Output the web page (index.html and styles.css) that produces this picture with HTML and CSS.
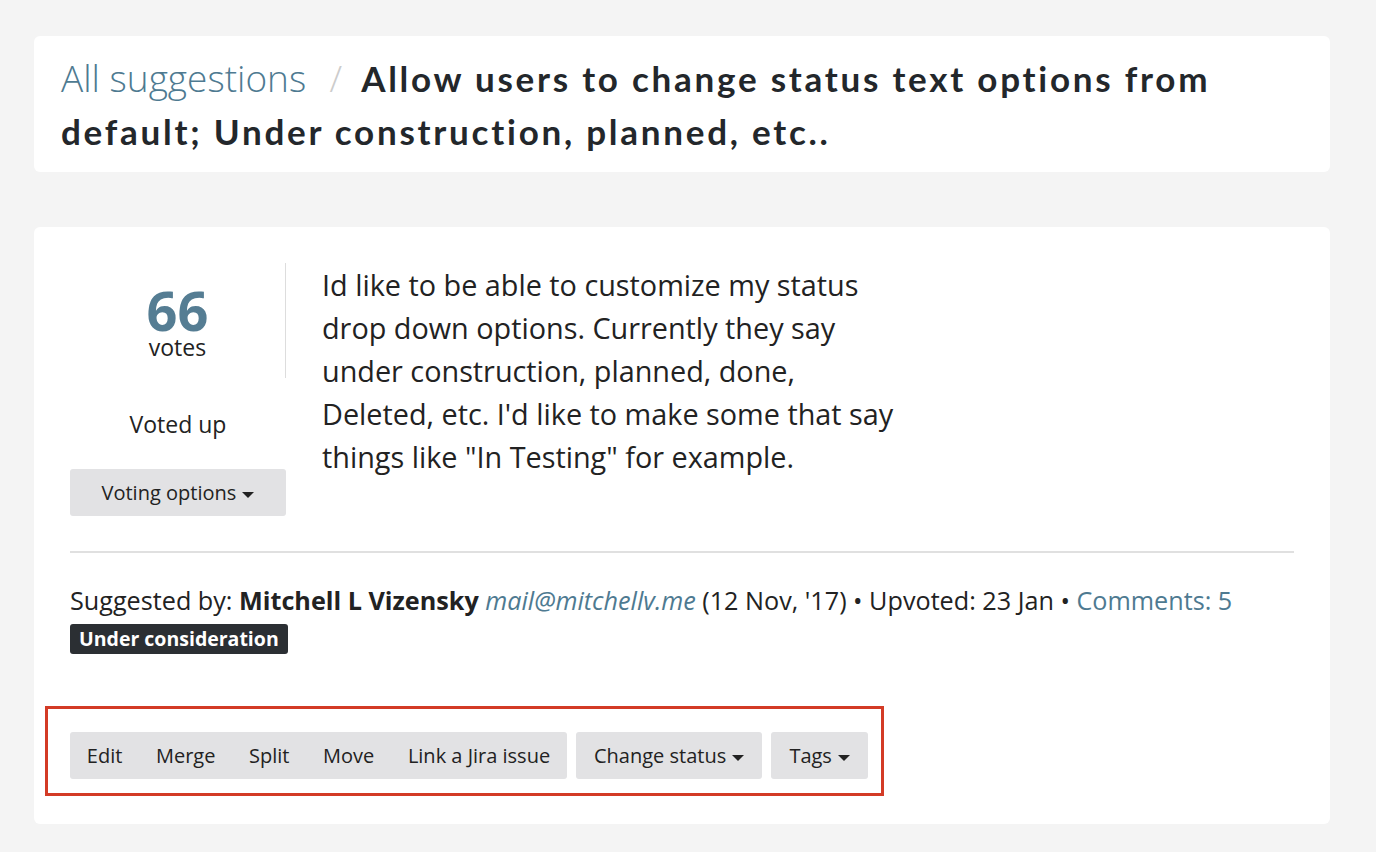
FILE: index.html
```html
<!DOCTYPE html>
<html>
<head>
    <title>Suggestion</title>
    <link rel="stylesheet" href="styles.css">
</head>
<body>
    <div class="page">
        <div class="card title-card">
            <h1 class="title">
                <a class="crumb" href="#">All suggestions</a>
                <span class="crumb-sep">/</span>
                Allow users to change status text options from default; Under construction, planned, etc..
            </h1>
        </div>

        <div class="card suggestion-card">
            <div class="suggestion-top">
                <div class="vote-col">
                    <div class="vote-count">
                        <div class="vote-number">66</div>
                        <div class="vote-label">votes</div>
                    </div>
                    <div class="voted-state">Voted up</div>
                    <button class="btn btn-wide">Voting options <span class="caret"></span></button>
                </div>
                <div class="description">
                    Id like to be able to customize my status drop down options. Currently they say under construction, planned, done, Deleted, etc. I'd like to make some that say things like "In Testing" for example.
                </div>
            </div>

            <hr class="divider">

            <div class="meta">
                Suggested by: <strong>Mitchell L Vizensky</strong> <a class="email" href="#">mail@mitchellv.me</a> (12 Nov, '17) &bull; Upvoted: 23 Jan &bull; <a href="#">Comments: 5</a>
            </div>
            <span class="status-badge">Under consideration</span>

            <div class="actions-box">
                <div class="btn-group">
                    <button class="btn">Edit</button>
                    <button class="btn">Merge</button>
                    <button class="btn">Split</button>
                    <button class="btn">Move</button>
                    <button class="btn">Link a Jira issue</button>
                </div>
                <button class="btn btn-solo">Change status <span class="caret"></span></button>
                <button class="btn btn-solo">Tags <span class="caret"></span></button>
            </div>
        </div>
    </div>
</body>
</html>
```

FILE: styles.css
```css
body {
    margin: 0;
    padding: 0;
    font-family: "Open Sans", Arial, sans-serif;
    background: #f4f4f4;
    color: #222;
}
a {
    color: #4e7a91;
    text-decoration: none;
}
.page {
    margin: 36px 46px 0 34px;
}
.card {
    background: #fff;
    border-radius: 6px;
}
.title-card {
    padding: 15px 27px 14px;
}
.title {
    margin: 0;
    font-family: "Lato", "Open Sans", sans-serif;
    font-weight: 700;
    font-size: 35px;
    line-height: 53px;
    color: #23272b;
    letter-spacing: 2.75px;
}
.crumb {
    font-family: "Open Sans", sans-serif;
    font-weight: 300;
    font-size: 37px;
    letter-spacing: 0;
}
.crumb-sep {
    font-family: "Open Sans", sans-serif;
    font-weight: 300;
    font-size: 37px;
    color: #ccc;
    letter-spacing: 0;
    margin: 0 9px 0 12px;
}
.suggestion-card {
    margin-top: 55px;
    padding: 36px 36px 28px;
}
.suggestion-top {
    display: flex;
}
.vote-col {
    width: 216px;
    flex-shrink: 0;
    text-align: center;
}
.vote-count {
    border-right: 1px solid #ddd;
    height: 115px;
    box-sizing: border-box;
    padding-top: 22px;
}
.vote-number {
    font-size: 54px;
    font-weight: 700;
    line-height: 50px;
    color: #557d93;
}
.vote-label {
    font-size: 23px;
    line-height: 24px;
    color: #222;
}
.voted-state {
    font-size: 23px;
    margin-top: 28px;
    line-height: 36px;
}
.description {
    padding-left: 36px;
    max-width: 585px;
    font-size: 28.8px;
    line-height: 43px;
}
.btn {
    font-family: "Open Sans", sans-serif;
    font-size: 20px;
    color: #222;
    background: #e2e2e4;
    border: none;
    border-radius: 3px;
    height: 47px;
    padding: 0 18px;
    cursor: pointer;
}
.btn-wide {
    width: 216px;
    margin-top: 27px;
}
.caret {
    display: inline-block;
    width: 0;
    height: 0;
    border-left: 6px solid transparent;
    border-right: 6px solid transparent;
    border-top: 6px solid #222;
    vertical-align: middle;
    margin-left: 1px;
}
.divider {
    border: none;
    border-top: 2px solid #e0e0e0;
    margin: 35px 0 31px;
}
.meta {
    font-size: 25.2px;
    line-height: 33px;
}
.meta strong {
    font-weight: 700;
}
.email {
    font-style: italic;
}
.status-badge {
    display: inline-block;
    margin-top: 7px;
    background: #2b2f33;
    color: #fff;
    font-weight: 700;
    font-size: 19.5px;
    line-height: 30px;
    padding: 0 9px;
    border-radius: 3px;
}
.actions-box {
    display: flex;
    gap: 9px;
    width: fit-content;
    margin: 52px 0 0 -25px;
    padding: 23px 13px 14px 22px;
    border: 3px solid #d33b26;
}
.btn-group {
    display: flex;
    background: #e2e2e4;
    border-radius: 3px;
}
.btn-group .btn {
    background: none;
    padding: 0 16.8px;
}
```
